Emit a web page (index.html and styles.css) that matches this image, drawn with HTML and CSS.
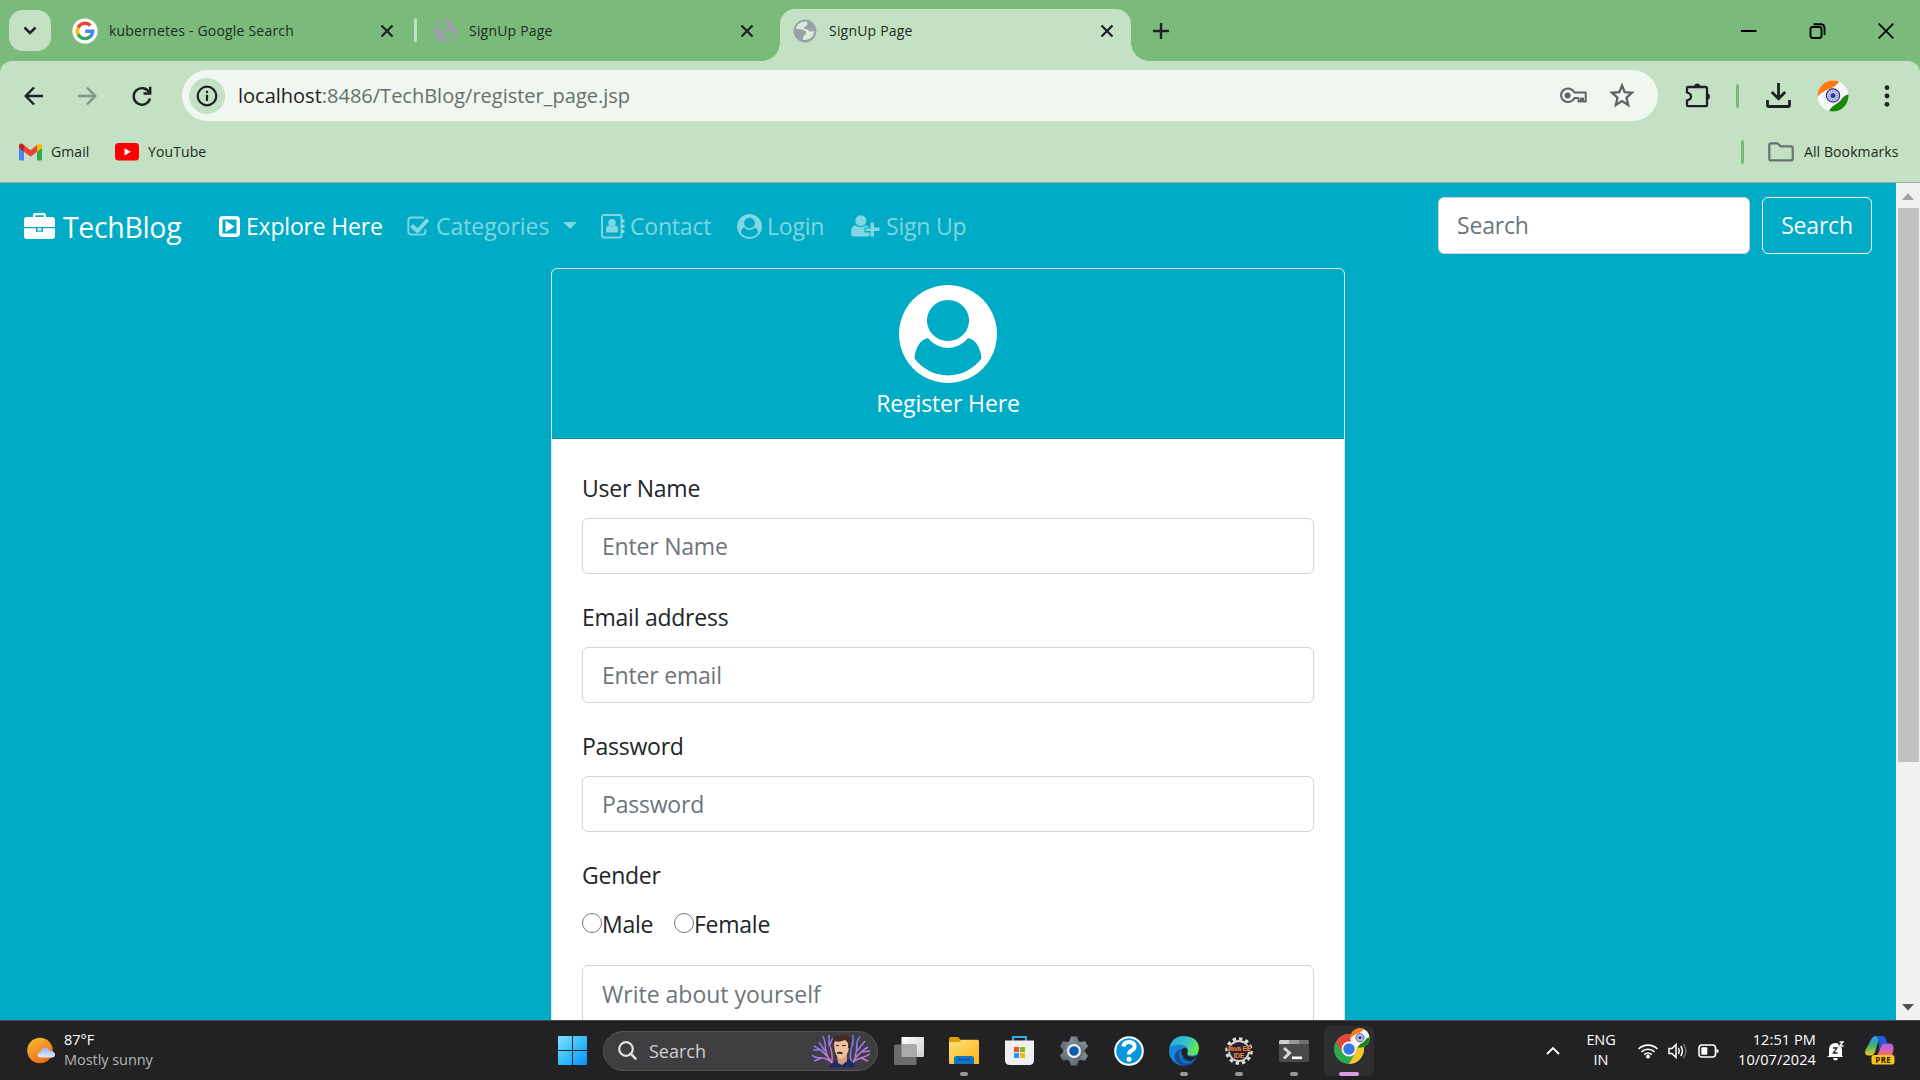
FILE: index.html
```html
<!DOCTYPE html>
<html lang="en">
<head>
<meta charset="utf-8">
<title>SignUp Page</title>
<link rel="stylesheet" href="styles.css">
</head>
<body>
<svg width="0" height="0" class="defs" aria-hidden="true">
  <defs>
    <linearGradient id="gWin" x1="0" y1="0" x2="1" y2="1"><stop offset="0" stop-color="#84e3ff"/><stop offset=".5" stop-color="#35bdfa"/><stop offset="1" stop-color="#0a90ff"/></linearGradient>
    <linearGradient id="gFolder" x1="0" y1="0" x2="1" y2="1"><stop offset="0" stop-color="#ffe07a"/><stop offset="1" stop-color="#f9b514"/></linearGradient>
    <linearGradient id="gSun" x1="0" y1="0" x2=".6" y2="1"><stop offset="0" stop-color="#f5bf35"/><stop offset="1" stop-color="#f06a13"/></linearGradient>
    <linearGradient id="gCloud" x1="0" y1="0" x2="0" y2="1"><stop offset="0" stop-color="#8fb6f3"/><stop offset="1" stop-color="#dfeafe"/></linearGradient>
    <linearGradient id="gEdgeA" x1="0" y1="0" x2="1" y2=".4"><stop offset="0" stop-color="#2aa3e0"/><stop offset=".6" stop-color="#32c6c8"/><stop offset="1" stop-color="#66e34e"/></linearGradient>
    <linearGradient id="gCoil" x1="0" y1="0" x2="1" y2="1"><stop offset="0" stop-color="#4f7df5"/><stop offset=".5" stop-color="#a877ea"/><stop offset="1" stop-color="#ff6fd0"/></linearGradient>
    <linearGradient id="gCopA" x1="0" y1="0" x2="0" y2="1"><stop offset="0" stop-color="#1f9cf5"/><stop offset=".5" stop-color="#3db16d"/><stop offset="1" stop-color="#eecb1e"/></linearGradient>
    <linearGradient id="gCopB" x1="0" y1="0" x2="0" y2="1"><stop offset="0" stop-color="#a962ef"/><stop offset="1" stop-color="#fb6a6a"/></linearGradient>
    <linearGradient id="gPane" x1="0" y1="0" x2="1" y2="1"><stop offset="0" stop-color="#fff"/><stop offset="1" stop-color="#cfcfcf"/></linearGradient>
    <linearGradient id="gGear" x1="0" y1="0" x2="1" y2="1"><stop offset="0" stop-color="#87929b"/><stop offset="1" stop-color="#59636c"/></linearGradient>
    <symbol id="globe" viewBox="0 0 24 24">
      <circle cx="12" cy="12" r="11.400" fill="#9a9fa8"/>
      <path d="M3 10C6 10 9 10 11.500 11.500C14 12.500 13.500 15.500 11.500 16.200C9.500 17 11 19 9.500 20.800C12 21.500 16.500 20.500 19 18C21 15.500 21.300 13 20.800 11.500C19 13.500 16 12.500 14.500 10.500C12 10.500 10.500 9.500 11 8C12.500 7 14 7 14.500 5.500C14 4.500 14.500 3.500 14.500 2.800C9 1.500 3.500 5 3 10Z" fill="var(--globe-sea)"/>
    </symbol>
    <symbol id="close" viewBox="0 0 14 14"><path d="M1.500 1.500 L12.500 12.500 M12.500 1.500 L1.500 12.500" stroke="#202124" stroke-width="2.300"/></symbol>
    <symbol id="usercircle" viewBox="0 0 98 98">
      <path fill-rule="evenodd" fill="currentColor" d="M49 0 A49 49 0 1 1 48.990 0Z M49 15 A21 20.500 0 1 0 49.010 15Z M29 53 C20 55 16 65 15.500 73.500 A41.500 41.500 0 0 0 82.500 73.500 C82 65 78 55 69 53 A25 25 0 0 1 29 53Z"/>
    </symbol>
    <symbol id="flag" viewBox="0 0 32 32">
      <circle cx="16" cy="16" r="15.500" fill="#f6f8f8"/>
      <path d="M.6 17 C0 8 7 .5 16 .5 Q20 .6 22 1.700 C18 8 12 8 8 11 Q3 13 .6 17Z" fill="#ff7a14"/>
      <path d="M31.500 14.500 C32 24 25 31.500 16 31.500 L12 31 C16 24 20 25 24 20 Q27 15 31.500 14.500Z" fill="#16890d"/>
      <circle cx="16" cy="15.500" r="6.600" fill="#dfe3f5" stroke="#23238c" stroke-width="1.200"/>
      <circle cx="16" cy="15.500" r="2.600" fill="#34389c"/><circle cx="16" cy="15.500" r="4.300" fill="none" stroke="#8388c6" stroke-width="1.800" stroke-dasharray="1 .7"/>
    </symbol>
  </defs>
</svg>

<header class="browser">
  <div class="tabstrip">
    <div class="tabsearch"><svg width="14" height="9" viewBox="0 0 14 9"><path d="M1.500 1.500 L7 7 L12.500 1.500" fill="none" stroke="#1f2125" stroke-width="2.500"/></svg></div>
    <div class="tab first">
      <svg width="26" height="26" viewBox="0 0 26 26"><circle cx="13" cy="13" r="12.600" fill="#fff"/><g fill="none" stroke-width="3.400"><path d="M6.100 9.700 A7.700 7.700 0 0 1 18.400 7.500" stroke="#ea4335"/><path d="M6.200 16.500 A7.700 7.700 0 0 1 6.200 9.500" stroke="#fbbc05"/><path d="M17.900 18.900 A7.700 7.700 0 0 1 6.100 16.300" stroke="#34a853"/><path d="M13.200 13.200 H20.700 A7.700 7.700 0 0 1 17.700 19" stroke="#4285f4"/></g></svg>
      <span class="title">kubernetes - Google Search</span>
      <svg width="14" height="14"><use href="#close"/></svg>
    </div>
    <div class="tab">
      <svg class="globe-dark" width="24" height="24"><use href="#globe"/></svg>
      <span class="title">SignUp Page</span>
      <svg width="14" height="14"><use href="#close"/></svg>
    </div>
    <div class="tab active">
      <svg class="globe-light" width="24" height="24"><use href="#globe"/></svg>
      <span class="title">SignUp Page</span>
      <svg width="14" height="14"><use href="#close"/></svg>
    </div>
    <svg class="newtab" width="16" height="16" viewBox="0 0 16 16"><path d="M8 0V16M0 8H16" stroke="#202124" stroke-width="2.400"/></svg>
    <div class="wincontrols">
      <svg width="16" height="16" viewBox="0 0 16 16"><path d="M0 8H15.500" stroke="#000" stroke-width="2"/></svg>
      <svg width="17" height="16" viewBox="0 0 17 16"><g fill="none" stroke="#000" stroke-width="1.900"><rect x="1.500" y="4" width="11" height="11" rx="2.200"/><path d="M4.500 1.200 H11.500 Q15.500 1.200 15.500 5.500 V12"/></g></svg>
      <svg width="16" height="16" viewBox="0 0 16 16"><path d="M.7 .7L15.300 15.300M15.300 .7L.7 15.300" stroke="#000" stroke-width="1.700"/></svg>
    </div>
  </div>

  <div class="toolwrap">
  <div class="toolbar">
    <svg class="back" width="20" height="20" viewBox="0 0 20 20"><path d="M19 10H2.500M10 1.500L1.700 10L10 18.500" fill="none" stroke="#202124" stroke-width="2.400"/></svg>
    <svg class="fwd" width="20" height="20" viewBox="0 0 20 20"><path d="M1 10H17.500M10 1.500L18.300 10L10 18.500" fill="none" stroke="#7f9482" stroke-width="2.400"/></svg>
    <svg class="reload" width="20" height="20" viewBox="0 0 20 20"><path d="M17.300 6.500A8.300 8.300 0 1 0 18 12.500" fill="none" stroke="#202124" stroke-width="2.400"/><path d="M18.200 .8V7.500H11.500" fill="none" stroke="#202124" stroke-width="2.400"/></svg>
    <div class="omnibox">
      <div class="info"><svg width="22" height="22" viewBox="0 0 22 22"><circle cx="11" cy="11" r="9.300" fill="none" stroke="#202124" stroke-width="2.200"/><path d="M11 9.700V16M11 5.700V8" stroke="#202124" stroke-width="2.200"/></svg></div>
      <span class="url"><b>localhost</b>:8486/TechBlog/register_page.jsp</span>
      <svg class="key" width="28" height="17" viewBox="0 0 28 17"><g fill="none" stroke="#5f6368" stroke-width="2"><path d="M15.500 5.500A7 6.800 0 1 0 15.500 11H19.500V14.500H22V11.500H24V14.500H26.700V5.500Z" stroke-linejoin="round"/></g><circle cx="8.600" cy="8.400" r="3" fill="#5f6368"/></svg>
      <svg class="star" width="26" height="25" viewBox="0 0 26 25"><path d="M13 2.500L15.700 9.200L23 9.800L17.500 14.700L19.200 22L13 18.100L6.800 22L8.500 14.700L3 9.800L10.300 9.200Z" fill="none" stroke="#5f6368" stroke-width="2.300"/></svg>
    </div>
    <svg class="puzzle" width="26" height="26" viewBox="0 0 26 26"><path d="M3 4H20.500Q22 4 22 5.500V22Q22 23.200 20.500 23.200H3.200Q2 23.200 2 22V17.500Q6 16.500 6 13.500Q6 10.500 2 9.500V5Q2 4 3 4Z" fill="none" stroke="#202124" stroke-width="2.300"/><path d="M9 3.500A3.300 3.500 0 0 1 15.500 3.500ZM22.500 10A3.300 3.500 0 0 1 22.500 16.800Z" fill="#202124"/></svg>
    <i class="bar b1"></i>
    <svg class="dl" width="25" height="25" viewBox="0 0 25 25"><path d="M12.500 0V15M5.800 9L12.500 15.700L19.200 9M1.500 17V22.500Q1.500 23.500 2.500 23.500H22.500Q23.500 23.500 23.500 22.500V17" fill="none" stroke="#202124" stroke-width="2.800"/></svg>
    <svg class="avatar" width="32" height="32"><use href="#flag"/></svg>
    <svg class="dots" width="6" height="22" viewBox="0 0 6 22"><g fill="#202124"><circle cx="3" cy="2.700" r="2.400"/><circle cx="3" cy="11" r="2.400"/><circle cx="3" cy="19.300" r="2.400"/></g></svg>
  </div>
  <div class="bookmarks">
    <svg width="23" height="18" viewBox="0 0 23 18"><path d="M0 3V16Q0 17.500 1.500 17.500H5V7Z" fill="#4285f4"/><path d="M23 3V16Q23 17.500 21.500 17.500H18V7Z" fill="#34a853"/><path d="M5 2L11.500 7.200L18 2V8.700L11.500 13.800L5 8.700Z" fill="#ea4335"/><path d="M0 3Q0 .4 2.500 .4Q3.500 .5 5 2V8.700L0 5Z" fill="#c5221f"/><path d="M23 3Q23 .4 20.500 .4Q19.500 .5 18 2V8.700L23 5Z" fill="#fbbc04"/></svg>
    <span class="bm gmail">Gmail</span>
    <svg width="24" height="18" viewBox="0 0 24 18"><rect width="24" height="17.500" rx="3.500" fill="#f00"/><path d="M9.500 5.200L16 8.800L9.500 12.400Z" fill="#fff"/></svg>
    <span class="bm yt">YouTube</span>
    <i class="bar b2"></i>
    <svg class="folder" width="26" height="20" viewBox="0 0 26 20"><path d="M3 1.300H9.500L12.500 4.300H23Q24.700 4.300 24.700 6V16.700Q24.700 18.400 23 18.400H3Q1.300 18.400 1.300 16.700V3Q1.300 1.300 3 1.300Z" fill="none" stroke="#6a7074" stroke-width="2.200"/></svg>
    <span class="bm all">All Bookmarks</span>
  </div>
  </div>
</header>

<div class="viewport">
  <main class="page">
    <nav class="navbar">
      <a class="brand">
        <svg width="31" height="26" viewBox="0 0 31 26"><path fill-rule="evenodd" fill="#fff" d="M9 4V2Q9 0 11 0H20Q22 0 22 2V4H28Q31 4 31 7V14H0V7Q0 4 3 4ZM11.300 4H19.700V2.300H11.300Z"/><path fill="#fff" d="M0 15.200H12V18.800H19V15.200H31V23Q31 26 28 26H3Q0 26 0 23ZM13.600 15.200H17.400V17.400H13.600Z"/></svg>
        <span>TechBlog</span>
      </a>
      <a class="item on explore"><svg width="21" height="21" viewBox="0 0 21 21"><path fill-rule="evenodd" fill="currentColor" d="M4 0H17Q21 0 21 4V17Q21 21 17 21H4Q0 21 0 17V4Q0 0 4 0ZM3.500 3.500V17.500H17.500V3.500ZM6.500 4.800L15.500 10.500L6.500 16.200Z"/></svg><span>Explore Here</span></a>
      <a class="item cat"><svg width="23" height="21" viewBox="0 0 23 21"><path d="M17 2Q16 1.500 15 1.500H4.500Q1.300 1.500 1.300 4.500V15.500Q1.300 18.700 4.500 18.700H15.500Q18.500 18.700 18.500 15.500V13" fill="none" stroke="currentColor" stroke-width="1.800"/><path d="M4.500 9.500L10.500 15L21 3.500" fill="none" stroke="currentColor" stroke-width="4"/></svg><span>Categories</span><i class="caret"></i></a>
      <a class="item contact"><svg width="24" height="25" viewBox="0 0 24 25"><rect x="1" y="1" width="19.500" height="22.500" rx="2" fill="none" stroke="currentColor" stroke-width="1.900"/><circle cx="11" cy="8.800" r="3.700" fill="currentColor"/><path d="M5 18.500V15Q5 11.500 8 11.500Q11 14 14 11.500Q17 11.500 17 15V18.500Z" fill="currentColor"/><path d="M21 5.500H23.500V8.500H21ZM21 10.800H23.500V13.800H21ZM21 16H23.500V19H21Z" fill="currentColor"/></svg><span>Contact</span></a>
      <a class="item login"><svg width="25" height="25"><use href="#usercircle"/></svg><span>Login</span></a>
      <a class="item signup"><svg width="29" height="22" viewBox="0 0 29 22"><g fill="currentColor"><circle cx="9.800" cy="5.700" r="5.500"/><path d="M4.500 10.300Q9.800 14 15 10.300Q17 10.500 18 12.500H13.500V17.500H18.500V20.500Q17.500 21.500 16 21.500H3Q0 21.500 0 18Q0 10.500 4.500 10.300Z"/><path d="M19.500 7.500H23V12.500H28.500V16H23V21.500H19.500V16H14.500V13.500H19.500Z"/></g></svg><span>Sign Up</span></a>
      <form class="navsearch">
        <input class="control" type="text" placeholder="Search">
        <button type="button" class="outline">Search</button>
      </form>
    </nav>
    <section class="card">
      <div class="card-head">
        <svg width="98" height="98"><use href="#usercircle"/></svg>
        <p>Register Here</p>
      </div>
      <form class="card-body">
        <div class="group"><label>User Name</label><input class="control" type="text" placeholder="Enter Name"></div>
        <div class="group"><label>Email address</label><input class="control" type="text" placeholder="Enter email"></div>
        <div class="group"><label>Password</label><input class="control" type="password" placeholder="Password"></div>
        <div class="group"><label>Gender</label>
          <div class="radios"><input type="radio" name="g"><span class="male">Male</span><input type="radio" name="g"><span>Female</span></div></div>
        <textarea class="control area" placeholder="Write about yourself"></textarea>
      </form>
    </section>
  </main>
  <aside class="scroll">
    <svg width="12" height="7" viewBox="0 0 12 7"><path d="M0 7L6 0L12 7Z" fill="#a3a3a3"/></svg>
    <div class="thumb"></div>
    <svg width="12" height="7" viewBox="0 0 12 7"><path d="M0 0L6 6.500L12 0Z" fill="#505050"/></svg>
  </aside>
</div>

<footer class="taskbar">
  <div class="weather">
    <svg width="28" height="28" viewBox="0 0 28 28"><circle cx="13" cy="13.500" r="12.800" fill="url(#gSun)"/><path d="M14 20.500Q10.500 20.500 10.500 18Q10.500 15.500 13.500 15Q14.500 10.500 18.500 10.500Q21.500 10.500 23 14Q28 14 28 17.500Q28 20.500 25 20.500Z" fill="url(#gCloud)"/></svg>
    <div class="lines"><div>87°F</div><div class="dim">Mostly sunny</div></div>
  </div>
  <div class="apps">
    <svg class="win" width="30" height="30" viewBox="0 0 30 30"><path d="M0 1Q0 0 1 0H14V14H0ZM15 0H28Q29 0 29 1V14H15ZM0 15H14V29H1Q0 29 0 28ZM15 15H29V28Q29 29 28 29H15Z" fill="url(#gWin)"/></svg>
    <div class="pill">
      <svg width="19" height="19" viewBox="0 0 19 19"><circle cx="8" cy="8" r="6.800" fill="none" stroke="#e2e2e2" stroke-width="2.200"/><path d="M12.700 12.700L17.500 17.700" stroke="#e2e2e2" stroke-width="2.500" stroke-linecap="round"/></svg>
      <span>Search</span>
      <svg class="art" width="60" height="34" viewBox="0 0 60 34">
        <g fill="none" stroke="url(#gCoil)" stroke-width="1.500"><path d="M24 33Q19 24 10 24Q4 24 1 21M20 28Q16 19 3 12M17 23Q14 17 14 8L12 2M14 17L8 8M10 16L2 16M21 28Q22 18 18 10V1M18 12L22 4M11 24L3 27"/><path d="M39 33Q42 26 50 24Q56 22 59 20M41 29Q46 20 57 13M44 24Q46 16 46 8L49 2M46 17L54 7M50 18L59 17M40 28Q38 18 42 9V1M42 12L38 4M50 24L57 27"/></g>
        <path d="M17 33.500Q20 29 27 26L37 25Q43 28 45 33.500Z" fill="#1c2c66"/>
        <path d="M26 22L27 29L31 31L36 27V19Z" fill="#d79f80"/>
        <path d="M23 8Q24 3 31 2.500Q39 4 38 13Q37.500 19 34.500 22Q30 27 27 23Q23 19 23 8Z" fill="#eec0a0"/>
        <path d="M22 12Q19 4 26 1.500Q35-1 39 3Q42 8 39 15L37 14Q38 8 34 6Q27 9 24 7Z" fill="#442b2a"/>
        <path d="M26 18.500Q29 17 32 18.800L31 20.200Q28.500 19.200 26.500 20ZM25 11H28V12H25ZM31 11H35V12H31Z" fill="#3b2524"/>
      </svg>
    </div>
    <div class="app"><svg width="30" height="28" viewBox="0 0 30 28"><rect x="7.500" width="22.500" height="20" rx="1" fill="url(#gPane)"/><rect y="7.500" width="22.500" height="20.500" rx="1.500" fill="#6c6c6c"/><rect x="7.500" y="7.500" width="15" height="12.500" fill="#aaa"/></svg></div>
    <div class="app run"><svg width="30" height="27" viewBox="0 0 30 27"><path d="M0 1.500Q0 0 1.500 0H9L12 3V8H0Z" fill="#dd9a09"/><path d="M0 5H10L12.500 2.800H28.500Q30 2.800 30 4.500V27H1Q0 27 0 25.500Z" fill="url(#gFolder)"/><path d="M5 27V21.500Q5 19 7.500 19H22.500Q25 19 25 21.500V27Z" fill="#1175c4"/><path d="M8.500 22.700H21.500" stroke="#07509b" stroke-width="1.300"/></svg></div>
    <div class="app"><svg width="29" height="29" viewBox="0 0 29 29"><path d="M8 7V1H21V7" fill="none" stroke="#30aef0" stroke-width="2"/><path d="M0 4.500H29V24Q29 29 24 29H5Q0 29 0 24Z" fill="#efefef"/><path d="M9 11H14V16H9Z" fill="#f0502a"/><path d="M15 11H20V16H15Z" fill="#7fba1a"/><path d="M9 17H14V22H9Z" fill="#13a1ed"/><path d="M15 17H20V22H15Z" fill="#fcb710"/></svg></div>
    <div class="app"><svg width="30" height="30" viewBox="-15 -15 30 30"><g fill="url(#gGear)"><circle r="10.800"/><g id="tooth"><path d="M-5 -9L-3 -14.500H3L5 -9ZM-5 9L-3 14.500H3L5 9Z"/></g><use href="#tooth" transform="rotate(60)"/><use href="#tooth" transform="rotate(120)"/></g><circle r="5.900" fill="#0d5cab" stroke="#f1f1f1" stroke-width="2.200"/></svg></div>
    <div class="app"><svg width="30" height="30" viewBox="0 0 30 30"><circle cx="15" cy="15" r="13.800" fill="#0a96dc" stroke="#fff" stroke-width="2"/><path d="M9.500 10.500Q10 6 15 6Q20.500 6 20.500 10.500Q20.500 13 17.500 14.500Q15 16 15 18.500" fill="none" stroke="#fff" stroke-width="4"/><circle cx="15" cy="23.300" r="2.500" fill="#fff"/></svg></div>
    <div class="app run"><svg width="30" height="30" viewBox="0 0 30 30"><circle cx="14.500" cy="15" r="14.500" fill="#1a86d8"/><path d="M.5 12Q3 0 15 0Q30 1 30 13Q29.500 19.500 23 19.500Q18 19.500 18.500 17Q20 14 18 11Q15 8 9 8.500Q3 9 .5 12Z" fill="url(#gEdgeA)"/><path d="M12 13Q8 21 14 26Q20 30 26 24Q21 31 13 29.500Q4 26 6 18Q8 14 12 13Z" fill="#0e4d97"/><path d="M13 13Q17 10 18.500 14Q19 16 18 17.500Q17.500 20 22 20.500Q26 20.500 28.500 19Q27 24 22 25Q13 25 12 17Q12 14 13 13Z" fill="#222224"/><path d="M13 18Q15 25 22 25Q25.500 24 27.500 20.500Q27 23 24.500 25.500Q17 29 13 23Z" fill="#1259ac"/></svg></div>
    <div class="app run"><svg width="28" height="28" viewBox="0 0 28 28"><circle cx="14" cy="14" r="12.300" fill="none" stroke="#e6e2d9" stroke-width="3" stroke-dasharray="3.400 3"/><circle cx="14" cy="14" r="10" fill="#2b2032" stroke="#d9d5ce" stroke-width="1.800"/><path d="M2 8.500H26V15H2Z" fill="#2b2032" opacity=".7"/><text x="14" y="13.500" class="java" textLength="25">Java EE</text><text x="14" y="20.500" class="java" textLength="11">IDE</text></svg></div>
    <div class="app run"><svg width="30" height="22" viewBox="0 0 30 22"><rect width="30" height="22" rx="1.500" fill="#4a4a4a"/><path d="M0 4V1.500Q0 0 1.500 0H10V4Z" fill="#cfcfcf"/><path d="M10 0H20V4H10Z" fill="#989898"/><path d="M20 0H28.500Q30 0 30 1.500V4H20Z" fill="#707070"/><path d="M5 8L10.500 13L5 18.500" fill="none" stroke="#d8d8d8" stroke-width="3"/><path d="M13 17.800H23" stroke="#fff" stroke-width="2.600"/></svg></div>
    <div class="app run current"><svg width="37" height="37" viewBox="0 0 37 37"><g transform="translate(0 6)"><circle cx="15" cy="15" r="15" fill="#2da94f"/><path d="M2 7.500A15 15 0 0 1 28 7.500L15 8L8.500 18.500Z" fill="#e5453a"/><path d="M28 7.500A15 15 0 0 1 15 30L21.500 18.500L15 8Z" fill="#fcc629"/><circle cx="15" cy="15" r="7.400" fill="#fff"/><circle cx="15" cy="15" r="5.800" fill="#3478e8"/></g><use href="#flag" x="16" y="0" width="20" height="20"/></svg></div>
  </div>
  <div class="tray">
    <svg class="up" width="14" height="9" viewBox="0 0 14 9"><path d="M1 8L7 2L13 8" fill="none" stroke="#fff" stroke-width="1.900"/></svg>
    <div class="lang lines"><div>ENG</div><div>IN</div></div>
    <svg class="wifi" width="20" height="16" viewBox="0 0 20 16"><g fill="none" stroke="#fff" stroke-width="1.600"><path d="M.6 6A13.300 13.300 0 0 1 19.400 6M3.500 8.900A9.200 9.200 0 0 1 16.500 8.900M6.200 11.600A5.400 5.400 0 0 1 13.800 11.600"/></g><circle cx="10" cy="13.600" r="2" fill="#fff"/></svg>
    <svg class="vol" width="20" height="18" viewBox="0 0 20 18"><g fill="none" stroke="#fff" stroke-width="1.500"><path d="M1 6.500H4L8 2.500V15.500L4 11.500H1Z"/><path d="M10.500 6Q12 9 10.500 12M12.800 4Q16 9 12.800 14"/><path d="M15.300 2Q20.500 9 15.300 16" stroke="#6b6b6b"/></g></svg>
    <svg class="bat" width="21" height="14" viewBox="0 0 21 14"><rect x="1" y="1" width="16.500" height="12" rx="3" fill="none" stroke="#fff" stroke-width="1.600"/><rect x="3.300" y="3.300" width="6" height="7.400" rx="1" fill="#fff"/><path d="M18.500 4.500L20.500 6V8L18.500 9.500Z" fill="#fff"/></svg>
    <div class="clock lines"><div>12:51 PM</div><div>10/07/2024</div></div>
    <svg class="bell" width="18" height="20" viewBox="0 0 18 20"><path d="M2 14.500V9Q2 2 9 2Q15 3 15 9V14.500L16 16H0ZM6 17H11Q10.500 19.500 8.500 19.500Q6.500 19.500 6 17Z" fill="#fff"/><path d="M11.500 0H17V6H11.500Z" fill="#222"/><path d="M12.500 1H16L12.500 5H16.500" fill="none" stroke="#fff" stroke-width="1.400"/><path d="M6 7H10L6.500 12H10.500" fill="none" stroke="#222" stroke-width="1.300"/></svg>
    <svg class="cop" width="30" height="29" viewBox="0 0 30 29"><path d="M7 2Q8.500 0 11 0H18Q15 0 13.500 5L10 16Q8.500 19.500 5 19.500H3Q-1 19 .5 14Z" fill="url(#gCopA)"/><path d="M11 0H17Q20 0 21 3L22.500 7.500H19Q16.500 7.500 15.500 10L13 17Q16 5 11 0Z" fill="#1f5ae0"/><path d="M19 7.500H25Q29 8 28.500 13L27 20H10Q13 19 14 16L16 10Q17 7.500 19 7.500Z" fill="url(#gCopB)"/><rect x="6.500" y="19" width="23" height="9.500" rx="2.500" fill="#fcc318"/><text x="18" y="26.700" class="pre" textLength="15.500">PRE</text></svg>
  </div>
</footer>
</body>
</html>
```
FILE: styles.css
```css
* { box-sizing: border-box; }
:root { --teal: #00acc5; --mint: #c4e1c4; --green: #7abb7b; }
body {
  margin: 0; width: 1920px; height: 1080px; overflow: hidden;
  display: flex; flex-direction: column;
  font-family: "Open Sans", "Noto Sans", sans-serif; color: #212529;
}
svg { display: block; flex: none; overflow: visible; }
.defs { position: absolute; }
span, label, p, .weather div, .tray div { white-space: nowrap; }

/* browser frame */
.browser { height: 183px; flex: none; background: var(--green); border-bottom: 1px solid #92ad97; }
.tabstrip { height: 61px; display: flex; align-items: center; padding-left: 9px; }
.tabsearch { width: 42px; height: 41px; margin-right: 9px; border-radius: 14px; background: var(--mint); display: flex; align-items: center; justify-content: center; }
.tab { position: relative; width: 360px; height: 52px; margin-top: 9px; padding: 0 26px 9px 13px; display: flex; align-items: center; gap: 12px; }
.tab.first { padding-left: 12px; gap: 11px; }
.tab.first::after { content: ""; position: absolute; left: 354px; top: 9px; width: 3px; height: 24px; border-radius: 2px; background: var(--mint); }
.title { flex: 1; font-size: 14px; letter-spacing: .2px; color: #1c2b1d; }
.tab.active { width: 351px; padding-right: 17px; background: var(--mint); border-radius: 15px 15px 0 0; }
.tab.active::before, .tab.active::after { content: ""; position: absolute; bottom: 0; width: 18px; height: 18px; }
.tab.active::before { left: -18px; background: radial-gradient(circle at 0 0, transparent 17.500px, var(--mint) 18px); }
.tab.active::after { right: -18px; background: radial-gradient(circle at 100% 0, transparent 17.500px, var(--mint) 18px); }
.globe-dark { --globe-sea: #7abb7b; }
.globe-light { --globe-sea: #d9ecd9; }
.newtab { margin-left: 22px; }
.wincontrols { margin-left: auto; margin-right: 26px; display: flex; align-items: center; gap: 52px; }
.toolwrap { height: 121px; background: var(--mint); border-radius: 12px 12px 0 0; padding-top: 9px; }
.toolbar { height: 51px; display: flex; align-items: center; padding-left: 24px; }
.fwd { margin-left: 33px; }
.reload { margin-left: 35px; }
.omnibox { margin-left: 30px; width: 1476px; height: 51px; flex: none; border-radius: 26px; background: #f0f7f0; display: flex; align-items: center; padding: 0 23px 0 7px; }
.info { width: 36px; height: 36px; border-radius: 50%; background: var(--mint); display: flex; align-items: center; justify-content: center; }
.url { flex: 1; margin-left: 13px; font-size: 20px; color: #66706a; }
.url b { font-weight: 400; color: #1f2022; }
.key { margin-right: 22px; }
.puzzle { margin-left: 27px; }
.bar { width: 3px; height: 24px; border-radius: 2px; background: var(--green); }
.b1 { margin-left: 25px; }
.dl { margin-left: 27px; }
.avatar { margin-left: 26px; }
.dots { margin-left: 35px; }
.bookmarks { height: 61px; display: flex; align-items: center; padding: 0 19px; }
.bm { font-size: 14px; letter-spacing: .1px; color: #1d291e; }
.gmail { width: 64px; margin-left: 9px; }
.yt { margin-left: 9px; }
.b2 { margin-left: auto; }
.folder { margin-left: 24px; }
.all { width: 97px; margin-left: 10px; }

/* page content */
.viewport { height: 837px; flex: none; display: flex; overflow: hidden; background: var(--teal); }
.page { width: 1896px; flex: none; }
.navbar { height: 85px; display: grid; align-items: center; grid-template-columns: 195px 188px 194px 136px 114px 200px 1fr; padding: 0 24px 0 24px; }
.brand, .item { display: flex; align-items: center; color: #fff; }
.brand span { margin-left: 8px; font-size: 28.500px; letter-spacing: -.35px; position: relative; top: 1px; }
.item { color: rgba(255,255,255,.5); font-size: 23px; letter-spacing: -.2px; }
.item.on { color: #fff; }
.item svg { margin-top: 1px; }
.item span { margin-left: 6px; }
.cat { letter-spacing: -.05px; }
.contact span, .login span { margin-left: 5px; }
.caret { margin-left: 14px; border: 7px solid transparent; border-top-color: currentColor; border-bottom: 0; }
.navsearch { display: flex; justify-content: flex-end; gap: 12px; margin-top: -1px; }
.control { display: block; width: 100%; height: 56px; margin: 0; padding: 0 19px; border: 1px solid #ced4da; border-radius: 6px; background: #fff; font: 23px "Open Sans", "Noto Sans", sans-serif; letter-spacing: -.2px; outline: 0; }
.control::placeholder { color: #6c757d; opacity: 1; }
.navsearch .control { width: 312px; height: 57px; padding: 0 18px; }
.outline { width: 110px; height: 57px; padding: 0; border: 1px solid #f8f9fa; border-radius: 6px; background: none; color: #f8f9fa; font: 23px "Open Sans", "Noto Sans", sans-serif; letter-spacing: -.2px; }
.card { width: 794px; height: 900px; margin-left: 551px; border: 1px solid #dfdfdf; border-radius: 6px; background: #fff; overflow: hidden; }
.card-head { height: 170px; background: var(--teal); border-bottom: 1px solid #0394a9; color: #fff; display: flex; flex-direction: column; align-items: center; padding-top: 16px; }
.card-head p { margin: 2px 0 0; font-size: 23px; line-height: 36px; letter-spacing: -.1px; }
.card-body { padding: 30px; }
.group { margin-bottom: 24px; }
label { display: block; height: 36px; margin-bottom: 13px; font-size: 23px; line-height: 38px; letter-spacing: -.25px; }
.radios { height: 36px; display: flex; align-items: center; font-size: 23px; letter-spacing: -.25px; }
.radios span { line-height: 38px; margin-top: 2px; }
.radios input { appearance: none; width: 20px; height: 20px; flex: none; margin: 0; border: 1.500px solid #767676; border-radius: 50%; background: #fff; }
.male { width: 72px; }
.area { height: 100px; padding-top: 12px; resize: none; letter-spacing: 0; }
.scroll { width: 24px; background: #f1f1f1; display: flex; flex-direction: column; align-items: center; padding: 10px 0 9px; }
.thumb { width: 21px; height: 554px; margin: 8px 0 auto 1px; background: #c1c1c1; }

/* taskbar */
.taskbar { height: 60px; flex: none; display: flex; background: #222224; border-top: 1px solid #434647; color: #fff; font-size: 14.500px; }
.lines { margin-top: -2px; }
.weather { width: 558px; flex: none; display: flex; align-items: center; padding-left: 27px; gap: 9px; line-height: 20px; }
.weather .dim { color: #b5b5b5; letter-spacing: -.05px; }
.apps { display: flex; align-items: center; }
.pill { width: 275px; height: 40px; margin: 0 6px 0 15px; border: 1px solid #555; border-radius: 20px; background: #3e3e40; display: flex; align-items: center; padding: 0 6px 0 14px; }
.pill span { flex: 1; margin-left: 12px; font-size: 18px; color: #d0d0d0; }
.app { position: relative; width: 50px; height: 50px; margin-right: 5px; display: flex; align-items: center; justify-content: center; }
.app.run::after { content: ""; position: absolute; left: 21px; bottom: 0; width: 8px; height: 4px; border-radius: 2px; background: #999; }
.app.current { border-radius: 6px; background: #2e2e30; }
.app.current svg { margin: -9px 0 0 6px; }
.app.current::after { left: 15px; width: 20px; background: #d99ee2; }
.java { font: 700 7px "Liberation Sans", sans-serif; fill: #e8863a; text-anchor: middle; }
.pre { font: 700 8px "Open Sans", sans-serif; fill: #221a00; text-anchor: middle; }
.tray { margin-left: auto; margin-right: 25px; display: flex; align-items: center; line-height: 20px; }
.lang { width: 40px; margin-left: 21px; margin-right: 17px; text-align: center; letter-spacing: -.1px; }
.vol { margin-left: 10px; }
.bat { margin-left: 10px; }
.clock { width: 90px; margin-left: 7px; text-align: right; letter-spacing: .1px; }
.bell { margin-left: 11px; }
.cop { margin-left: 20px; }
```
